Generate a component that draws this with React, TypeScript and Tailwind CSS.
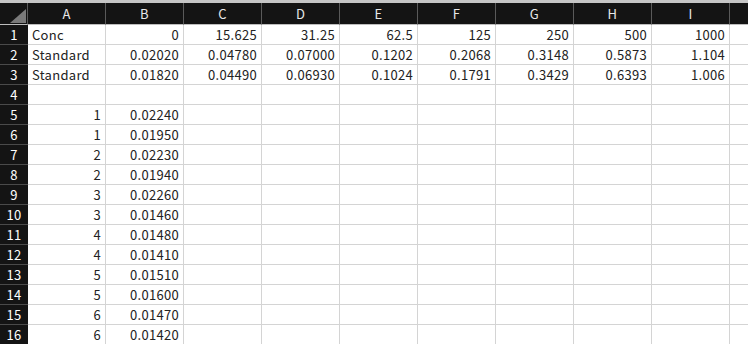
const cols = ['A', 'B', 'C', 'D', 'E', 'F', 'G', 'H', 'I'];

const rows: (string | number)[][] = [
  ['Conc', 0, 15.625, 31.25, 62.5, 125, 250, 500, 1000],
  ['Standard', '0.02020', '0.04780', '0.07000', '0.1202', '0.2068', '0.3148', '0.5873', '1.104'],
  ['Standard', '0.01820', '0.04490', '0.06930', '0.1024', '0.1791', '0.3429', '0.6393', '1.006'],
  [],
  [1, '0.02240'],
  [1, '0.01950'],
  [2, '0.02230'],
  [2, '0.01940'],
  [3, '0.02260'],
  [3, '0.01460'],
  [4, '0.01480'],
  [4, '0.01410'],
  [5, '0.01510'],
  [5, '0.01600'],
  [6, '0.01470'],
  [6, '0.01420'],
];

export default function App() {
  return (
    <div
      className="h-[344px] w-[748px] overflow-hidden bg-white text-[13px] tracking-[0.3px] text-[#222]"
      style={{ fontFamily: '"Noto Sans CJK JP", "Noto Sans", sans-serif' }}
    >
      <div className="h-[3px] bg-[#c6c6c6]" />
      <div className="grid grid-cols-[28px_repeat(9,78px)_1fr] grid-rows-[22px] auto-rows-[20px] leading-none">
        {/* header row */}
        <div className="relative bg-[#141414] border-r border-[#5a5a5a] border-b border-b-[#bdbdbd]">
          <svg className="absolute left-[10px] top-[6px]" width="16" height="14" viewBox="0 0 16 14">
            <polygon points="16,0 16,14 0,14" fill="#7a7a7a" />
          </svg>
        </div>
        {cols.map((c) => (
          <div
            key={c}
            className="flex items-center justify-center bg-[#141414] text-[#e8e8e8] border-r border-[#5a5a5a] border-b border-b-[#bdbdbd]"
          >
            {c}
          </div>
        ))}
        <div className="bg-[#141414] border-b border-b-[#bdbdbd]" />

        {rows.map((r, i) => (
          <Row key={i} n={i + 1} cells={r} />
        ))}
      </div>
    </div>
  );
}

function Row({ n, cells }: { n: number; cells: (string | number)[] }) {
  return (
    <>
      <div className="flex items-center justify-center bg-[#141414] text-white border-b border-[#4a4a4a]">
        {n}
      </div>
      {cols.map((c, j) => {
        const v = cells[j];
        const isText = typeof v === 'string' && isNaN(Number(v));
        return (
          <div
            key={c}
            className={`flex items-center px-[4px] border-r border-b border-[#d4d4d4] ${isText ? 'justify-start' : 'justify-end'}`}
          >
            {v === undefined ? '' : v}
          </div>
        );
      })}
      <div className="border-b border-[#d4d4d4]" />
    </>
  );
}
